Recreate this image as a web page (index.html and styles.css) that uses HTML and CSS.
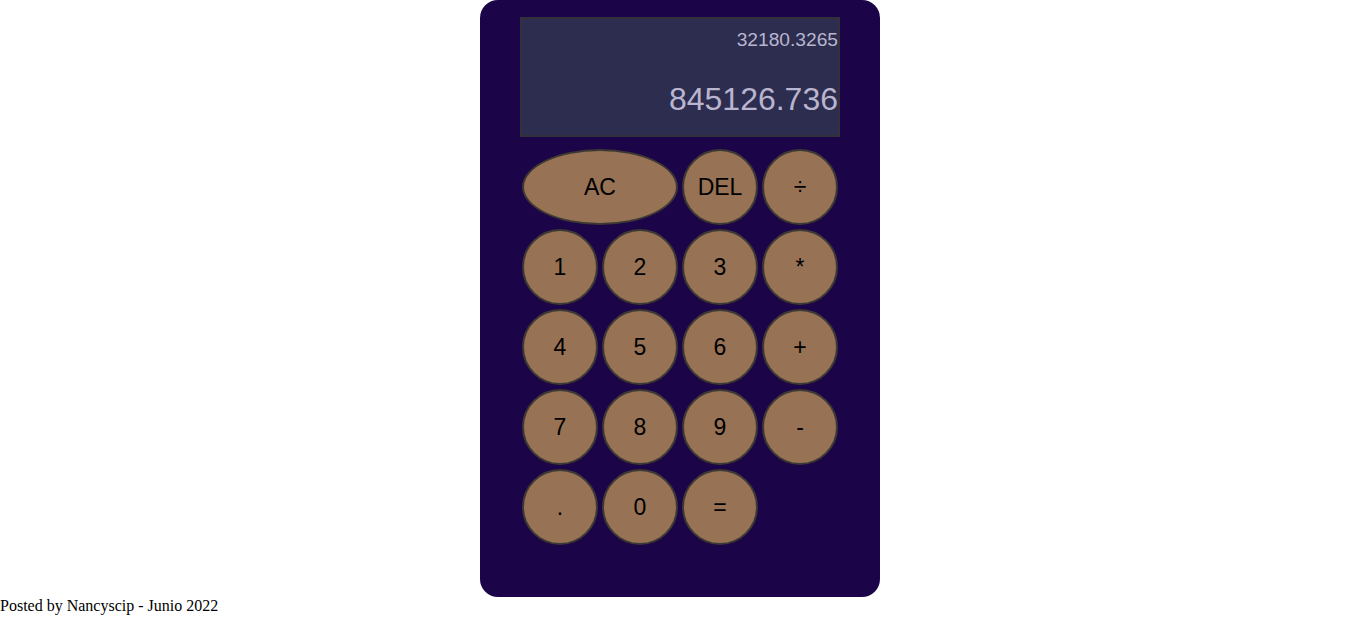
FILE: index.html
```html
<!DOCTYPE html>
<html lang="es">
<head>
<meta charset="utf-8">
<title>Calculadora</title>
<link rel="stylesheet" href="styles.css">
</head>
<body>
<div class="calculator">
  <div class="display">
    <div class="previous">32180.3265</div>
    <div class="current">845126.736</div>
  </div>
  <div class="keys">
    <button class="key span-two">AC</button>
    <button class="key">DEL</button>
    <button class="key">÷</button>
    <button class="key">1</button>
    <button class="key">2</button>
    <button class="key">3</button>
    <button class="key">*</button>
    <button class="key">4</button>
    <button class="key">5</button>
    <button class="key">6</button>
    <button class="key">+</button>
    <button class="key">7</button>
    <button class="key">8</button>
    <button class="key">9</button>
    <button class="key">-</button>
    <button class="key">.</button>
    <button class="key">0</button>
    <button class="key">=</button>
  </div>
</div>
<p class="footer">Posted by Nancyscip - Junio 2022</p>
</body>
</html>
```
FILE: styles.css
```css
* {
  box-sizing: border-box;
}

body {
  margin: 0;
  background: #ffffff;
  font-family: "Liberation Serif", "Times New Roman", serif;
}

.calculator {
  width: 400px;
  margin: 0 auto;
  padding: 17px 40px 50px;
  background: #1b0448;
  border-radius: 18px;
}

.display {
  width: 320px;
  height: 120px;
  margin-bottom: 10px;
  padding: 10px 0 0;
  background: #2c2d4f;
  border: 2px solid #33323c;
  display: flex;
  flex-direction: column;
  align-items: flex-end;
  font-family: "Liberation Sans", Arial, sans-serif;
  color: #bab5cf;
}

.previous {
  font-size: 19.2px;
}

.current {
  margin-top: 30px;
  font-size: 32px;
}

.keys {
  display: grid;
  grid-template-columns: repeat(4, 80px);
  grid-auto-rows: 80px;
}

.key {
  margin: 2px;
  padding: 0;
  background: #977254;
  border: 2px solid #3d3833;
  border-radius: 50%;
  font-family: "Liberation Sans", Arial, sans-serif;
  font-size: 23px;
  color: #000000;
  cursor: pointer;
}

.span-two {
  grid-column: span 2;
}

.footer {
  margin: 0;
  font-size: 16px;
  color: #000000;
}
```
